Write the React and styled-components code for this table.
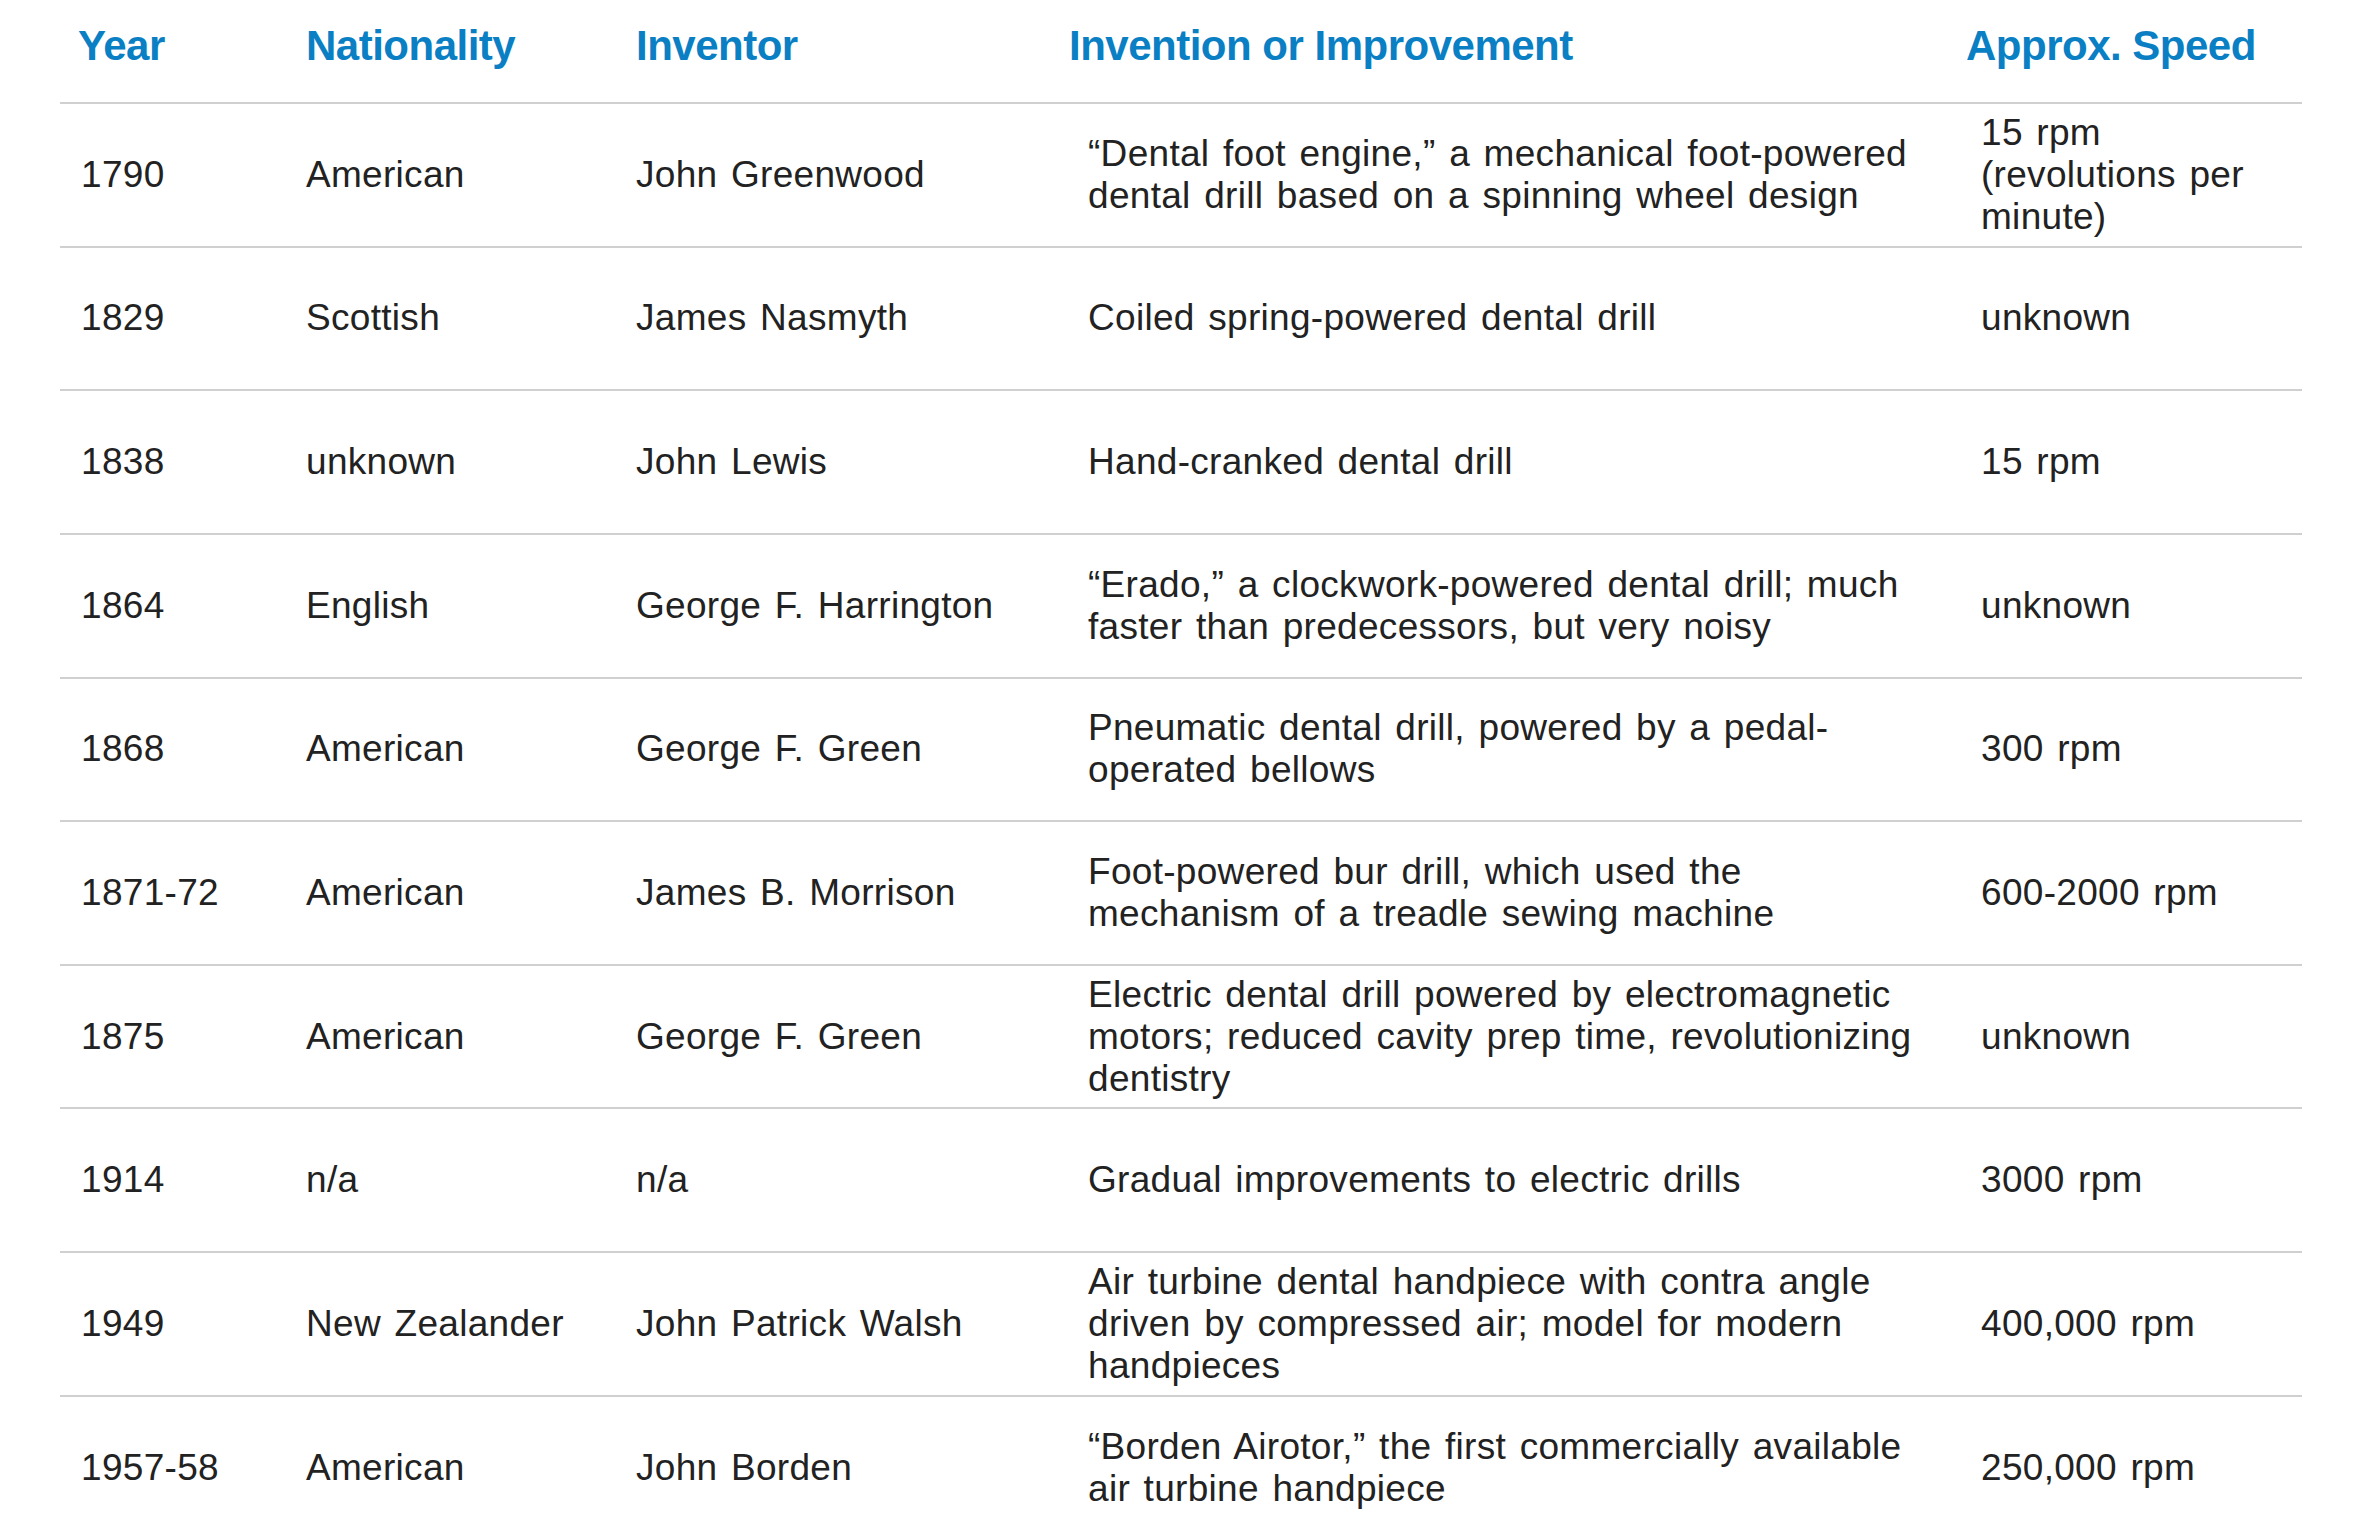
import React from 'react'
import styled, { createGlobalStyle } from 'styled-components'

const GlobalStyle = createGlobalStyle`
  html, body {
    margin: 0;
    padding: 0;
    background: #ffffff;
  }
  body {
    font-family: "Liberation Sans", Arial, Helvetica, sans-serif;
    color: #222222;
  }
`

const COLUMNS = '228px 330px 433px 897px 354px'

const Page = styled.div`
  padding-left: 60px;
  width: 2242px;
`

const Table = styled.div`
  display: grid;
  grid-auto-rows: auto;
`

const HeadRow = styled.div`
  display: grid;
  grid-template-columns: ${COLUMNS};
  box-sizing: border-box;
  height: 104px;
  border-bottom: 2px solid #d0d0d0;
`

const HeadCell = styled.div`
  padding: 22px 0 0 18px;
  font-size: 42px;
  line-height: 48px;
  font-weight: 700;
  letter-spacing: -0.5px;
  color: #0a7fc4;
  white-space: nowrap;
`

const Row = styled.div`
  display: grid;
  grid-template-columns: ${COLUMNS};
  align-items: center;
  box-sizing: border-box;
  height: 143.65px;
  border-bottom: 2px solid #d0d0d0;
`

const Cell = styled.div`
  padding-left: ${p => p.$indent}px;
  font-size: 37px;
  line-height: 42px;
  letter-spacing: 0.3px;
  word-spacing: 3px;
  white-space: nowrap;
`

const headers = [
  'Year',
  'Nationality',
  'Inventor',
  'Invention or Improvement',
  'Approx. Speed',
]

const indents = [21, 18, 18, 37, 33]

const rows = [
  [
    '1790',
    'American',
    'John Greenwood',
    [
      '\u201CDental foot engine,\u201D a mechanical foot-powered',
      'dental drill based on a spinning wheel design',
    ],
    ['15 rpm', '(revolutions per', 'minute)'],
  ],
  ['1829', 'Scottish', 'James Nasmyth', 'Coiled spring-powered dental drill', 'unknown'],
  ['1838', 'unknown', 'John Lewis', 'Hand-cranked dental drill', '15 rpm'],
  [
    '1864',
    'English',
    'George F. Harrington',
    [
      '\u201CErado,\u201D a clockwork-powered dental drill; much',
      'faster than predecessors, but very noisy',
    ],
    'unknown',
  ],
  [
    '1868',
    'American',
    'George F. Green',
    ['Pneumatic dental drill, powered by a pedal-', 'operated bellows'],
    '300 rpm',
  ],
  [
    '1871-72',
    'American',
    'James B. Morrison',
    ['Foot-powered bur drill, which used the', 'mechanism of a treadle sewing machine'],
    '600-2000 rpm',
  ],
  [
    '1875',
    'American',
    'George F. Green',
    [
      'Electric dental drill powered by electromagnetic',
      'motors; reduced cavity prep time, revolutionizing',
      'dentistry',
    ],
    'unknown',
  ],
  ['1914', 'n/a', 'n/a', 'Gradual improvements to electric drills', '3000 rpm'],
  [
    '1949',
    'New Zealander',
    'John Patrick Walsh',
    [
      'Air turbine dental handpiece with contra angle',
      'driven by compressed air; model for modern',
      'handpieces',
    ],
    '400,000 rpm',
  ],
  [
    '1957-58',
    'American',
    'John Borden',
    [
      '\u201CBorden Airotor,\u201D the first commercially available',
      'air turbine handpiece',
    ],
    '250,000 rpm',
  ],
]

const Lines = ({ value }) => {
  if (!Array.isArray(value)) return value
  return value.map((line, i) => (
    <React.Fragment key={i}>
      {i > 0 && <br />}
      {line}
    </React.Fragment>
  ))
}

export default function App() {
  return (
    <Page>
      <GlobalStyle />
      <Table>
        <HeadRow>
          {headers.map(h => (
            <HeadCell key={h}>{h}</HeadCell>
          ))}
        </HeadRow>
        {rows.map((row, r) => (
          <Row key={r}>
            {row.map((value, c) => (
              <Cell key={c} $indent={indents[c]}>
                <Lines value={value} />
              </Cell>
            ))}
          </Row>
        ))}
      </Table>
    </Page>
  )
}
